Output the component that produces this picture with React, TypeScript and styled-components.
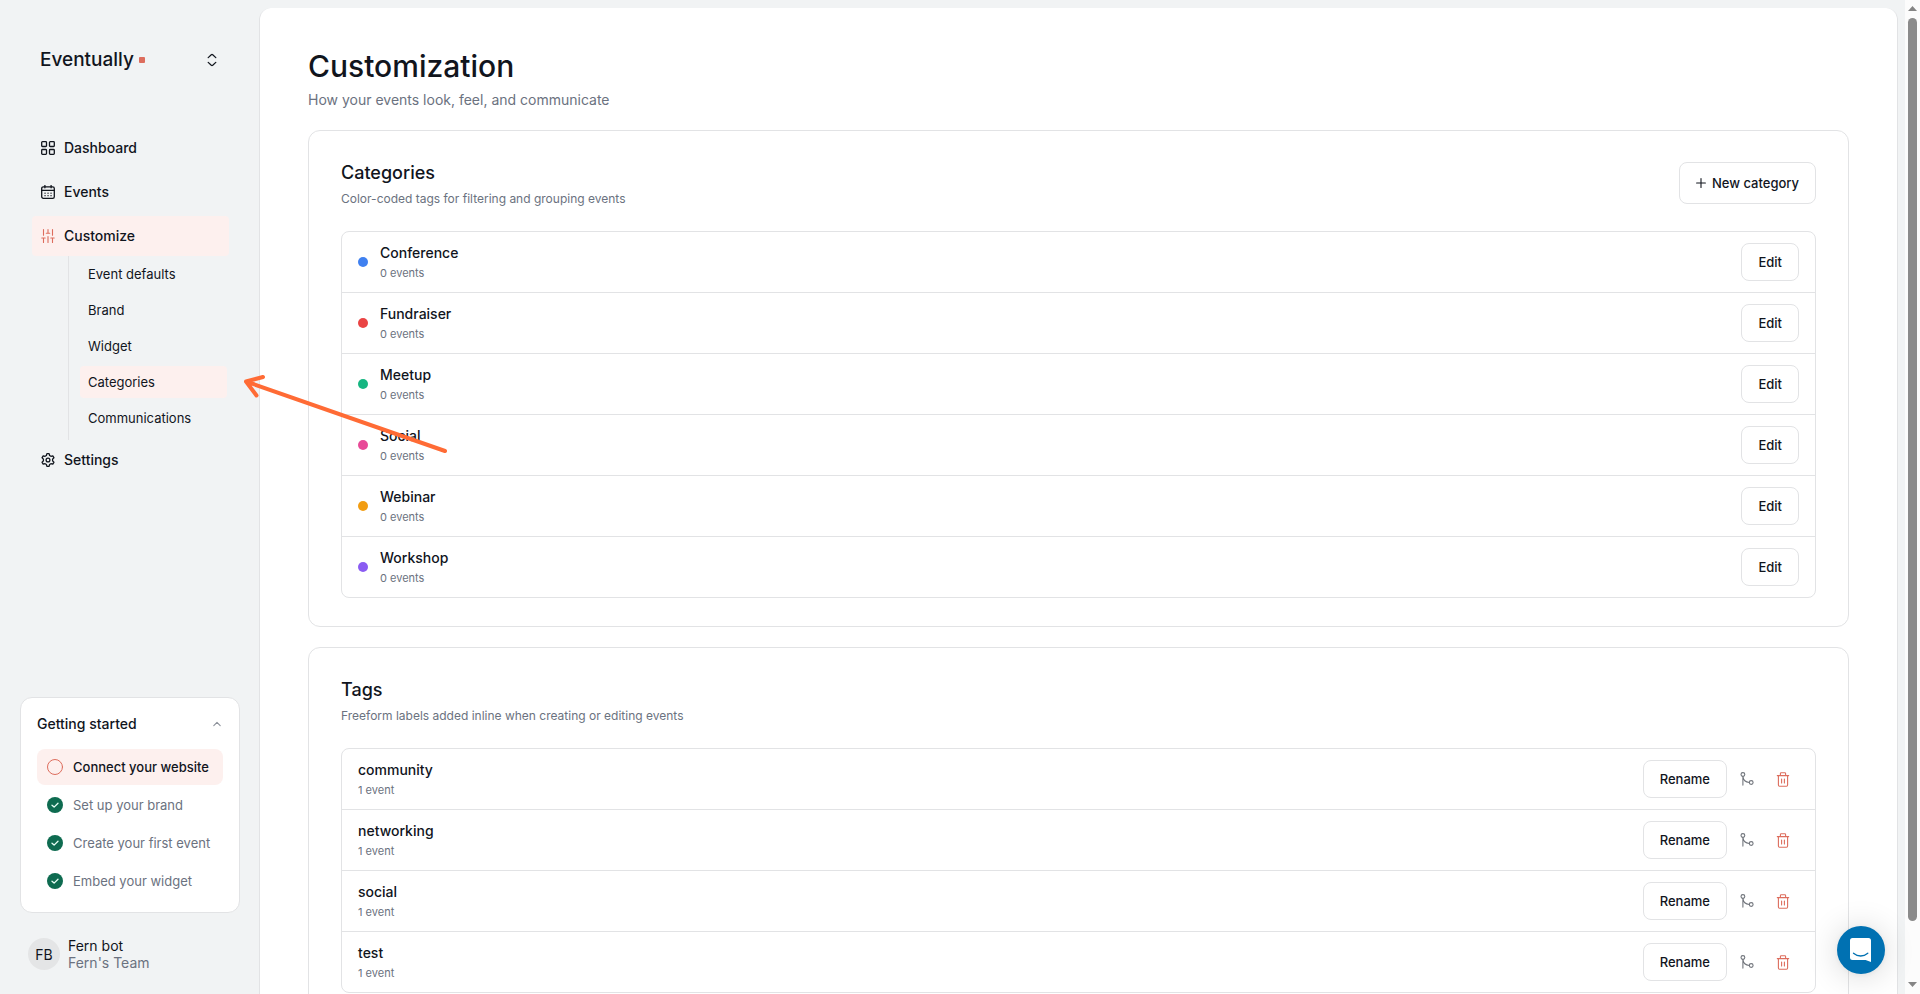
import React from "react";
import styled, { createGlobalStyle } from "styled-components";

const ink = "#11151d";
const muted = "#6b7280";
const line = "#e2e3e5";
const coral = "#dd6d5d";
const blush = "#fdf0ee";

const GlobalStyle = createGlobalStyle`
  *, *::before, *::after { box-sizing: border-box; }
  body {
    margin: 0;
    background: #f1f3f4;
    color: ${ink};
    font-family: Inter, "Liberation Sans", sans-serif;
    font-size: 14px;
    line-height: 20px;
  }
  h1, h2, h3, p, ul { margin: 0; padding: 0; font-weight: inherit; }
  ul { list-style: none; }
  a { color: inherit; text-decoration: none; }
  button { font: inherit; color: inherit; cursor: pointer; }
  svg { display: block; flex: none; }
`;

const Shell = styled.div`
  display: grid;
  grid-template-columns: 259px minmax(0, 1fr) 15px;
  grid-template-rows: minmax(0, 1fr);
  height: 100vh;
  overflow: hidden;
`;

const Sidebar = styled.aside`
  display: flex;
  flex-direction: column;
  min-height: 0;
  padding: 40px 19px 23px 20px;
`;

const SiteSwitcher = styled.button`
  display: flex;
  align-items: center;
  justify-content: space-between;
  height: 40px;
  margin: 0 0 48px;
  padding: 0 23px 0 20px;
  border: 0;
  background: none;
`;

const Brand = styled.span`
  display: flex;
  align-items: center;
  gap: 5px;
  font-size: 19px;
  line-height: 24px;
  font-weight: 500;
`;

const BrandMark = styled.span`
  width: 6px;
  height: 6px;
  border-radius: 1px;
  background: ${coral};
`;

const Nav = styled.nav`
  display: flex;
  flex-direction: column;
  gap: 4px;
  padding: 0 11px 0 12px;
`;

const NavLink = styled.a<{ $active?: boolean }>`
  display: flex;
  align-items: center;
  gap: 9px;
  height: 40px;
  padding: 0 9px;
  border-radius: 4px;
  font-weight: 500;
  background: ${(p) => (p.$active ? blush : "transparent")};
  svg { color: ${(p) => (p.$active ? coral : ink)}; }
`;

const SubNav = styled.ul`
  display: flex;
  flex-direction: column;
  gap: 4px;
  margin: -4px 0 -4px 36px;
  padding: 2px 2px 6px 11px;
  border-left: 1px solid ${line};
`;

const SubLink = styled.a<{ $active?: boolean }>`
  display: flex;
  align-items: center;
  height: 32px;
  padding: 0 8px;
  border-radius: 4px;
  font-size: 13px;
  background: ${(p) => (p.$active ? blush : "transparent")};
`;

const Checklist = styled.section`
  margin-top: auto;
  padding: 16px 16px 13px;
  border: 1px solid ${line};
  border-radius: 12px;
  background: #fff;
`;

const ChecklistToggle = styled.button`
  display: flex;
  align-items: center;
  justify-content: space-between;
  width: 100%;
  margin-bottom: 15px;
  padding: 0;
  border: 0;
  background: none;
  font-weight: 500;
  svg { margin-right: 2px; color: #8b9099; }
`;

const Steps = styled.ul`
  display: flex;
  flex-direction: column;
  gap: 2px;
`;

const StepLink = styled.a<{ $current?: boolean }>`
  display: flex;
  align-items: center;
  gap: 10px;
  height: 36px;
  padding: 0 10px;
  border-radius: 8px;
  font-size: 13px;
  white-space: nowrap;
  font-weight: ${(p) => (p.$current ? 500 : 400)};
  color: ${(p) => (p.$current ? ink : muted)};
  background: ${(p) => (p.$current ? blush : "transparent")};
`;

const Profile = styled.button`
  display: flex;
  align-items: center;
  gap: 8px;
  margin-top: 24px;
  padding: 0 8px;
  border: 0;
  background: none;
  text-align: left;
  line-height: 17px;
`;

const Avatar = styled.span`
  display: grid;
  place-items: center;
  width: 32px;
  height: 32px;
  border-radius: 50%;
  background: #e4e5e6;
`;

const ProfileText = styled.span`
  display: flex;
  flex-direction: column;
`;

const Quiet = styled.span`
  color: ${muted};
`;

const Main = styled.main`
  display: flex;
  flex-direction: column;
  gap: 20px;
  margin: 8px 7px 0 0;
  padding: 40px 48px;
  border: 1px solid ${line};
  border-width: 0 1px 0 1px;
  border-radius: 12px 12px 0 0;
  background: #fff;
`;

const PageTitle = styled.h1`
  font-size: 30px;
  line-height: 36px;
  font-weight: 500;
`;

const PageLead = styled.p`
  margin-top: 6px;
  color: ${muted};
`;

const Card = styled.section`
  padding: 28px 32px;
  border: 1px solid ${line};
  border-radius: 12px;
`;

const CardHeader = styled.header`
  display: flex;
  align-items: center;
  justify-content: space-between;
  min-height: 48px;
  margin-bottom: 24px;
`;

const CardTitle = styled.h2`
  font-size: 18px;
  line-height: 28px;
  font-weight: 500;
`;

const CardNote = styled.p`
  font-size: 12px;
  line-height: 24px;
  margin-bottom: -4px;
  color: ${muted};
`;

const OutlineButton = styled.button<{ $large?: boolean }>`
  display: flex;
  align-items: center;
  gap: 6px;
  height: ${(p) => (p.$large ? 42 : 38)}px;
  padding: 0 16px;
  border: 1px solid ${line};
  border-radius: 8px;
  background: #fff;
  font-size: 13px;
  font-weight: 500;
`;

const IconButton = styled.button<{ $danger?: boolean }>`
  display: grid;
  place-items: center;
  width: 32px;
  height: 32px;
  padding: 0;
  border: 0;
  background: none;
  color: ${(p) => (p.$danger ? coral : "#71757c")};
`;

const List = styled.ul`
  border: 1px solid ${line};
  border-radius: 8px;
`;

const Row = styled.li`
  display: flex;
  align-items: center;
  gap: 12px;
  padding: 11px 16px;
  & + & { border-top: 1px solid ${line}; }
`;

const Swatch = styled.span<{ $color: string }>`
  width: 10px;
  height: 10px;
  border-radius: 50%;
  background: ${(p) => p.$color};
`;

const RowText = styled.div`
  flex: 1;
`;

const RowName = styled.p`
  font-weight: 500;
`;

const RowCount = styled.p`
  padding-top: 2px;
  font-size: 11px;
  line-height: 16px;
  color: ${muted};
`;

const Actions = styled.div`
  display: flex;
  align-items: center;
  gap: 4px;
`;

const ScrollTrack = styled.div`
  display: flex;
  flex-direction: column;
  align-items: center;
  justify-content: space-between;
  padding: 6px 0 7px;
  background: #fcfcfc;
`;

const ScrollThumb = styled.div`
  width: 9px;
  height: 92%;
  margin: 7px 0 auto;
  border-radius: 5px;
  background: #8b8b8b;
`;

const ChatButton = styled.button`
  position: fixed;
  right: 35px;
  bottom: 20px;
  display: grid;
  place-items: center;
  width: 48px;
  height: 48px;
  padding: 0;
  border: 0;
  border-radius: 50%;
  background: #0071b2;
  box-shadow: 0 1px 6px rgba(0, 0, 0, 0.06), 0 2px 32px rgba(0, 0, 0, 0.16);
`;

const Pointer = styled.svg`
  position: absolute;
  left: 240px;
  top: 370px;
  pointer-events: none;
`;

const iconProps = {
  fill: "none",
  stroke: "currentColor",
  strokeLinecap: "round" as const,
  strokeLinejoin: "round" as const,
  "aria-hidden": true,
};

const GridIcon = () => (
  <svg width="14" height="14" viewBox="0 0 14 14" {...iconProps} strokeWidth="1.3">
    <rect x=".7" y=".7" width="4.8" height="4.8" rx=".8" />
    <rect x="8.5" y=".7" width="4.8" height="4.8" rx=".8" />
    <rect x=".7" y="8.5" width="4.8" height="4.8" rx=".8" />
    <rect x="8.5" y="8.5" width="4.8" height="4.8" rx=".8" />
  </svg>
);

const CalendarIcon = () => (
  <svg width="14" height="14" viewBox="0 0 14 14" {...iconProps} strokeWidth="1.3">
    <rect x=".7" y="1.8" width="12.6" height="11.5" rx="1.6" />
    <path d="M.7 5.4h12.6M3.9.4v2.4M10.1.4v2.4" />
    <path d="M4 8.2h.1M7 8.2h.1M10 8.2h.1M4 10.7h.1M7 10.7h.1M10 10.7h.1" />
  </svg>
);

const SlidersIcon = () => (
  <svg width="14" height="14" viewBox="0 0 14 14" {...iconProps} strokeWidth="1.1">
    <path d="M2.5.6v5.6M2.5 9v4.4M.8 9h3.4M7 .6v3.6M7 7.6v5.8M5.3 4.3h3.4M11.5.6v5.6M11.5 9v4.4M9.8 9h3.4" />
  </svg>
);

const GearIcon = () => (
  <svg width="14" height="14" viewBox="0 0 14 14" {...iconProps} strokeWidth="1.3">
    <path d="M5.900.7h2.200l.5 1.800 1.300.8 1.900-.5 1.100 1.900-1.300 1.400v1.800l1.300 1.400-1.100 1.900-1.900-.5-1.300.8-.5 1.800H5.900l-.5-1.800-1.300-.8-1.900.5-1.100-1.900 1.300-1.400V6.100L1.100 4.700l1.100-1.900 1.900.5 1.300-.8z" />
    <circle cx="7" cy="7" r="1.900" />
  </svg>
);

const SwitchIcon = () => (
  <svg width="10" height="14" viewBox="0 0 10 14" {...iconProps} strokeWidth="1.3">
    <path d="M1.200 4.600 4.300 1.700q.7-.6 1.400 0l3.100 2.900M1.200 9.400l3.100 2.900q.7.6 1.400 0l3.100-2.900" />
  </svg>
);

const ChevronUpIcon = () => (
  <svg width="8" height="6" viewBox="0 0 8 6" {...iconProps} strokeWidth="1.100">
    <path d="M.8 4.600 4 1.400l3.200 3.200" />
  </svg>
);

const PlusIcon = () => (
  <svg width="10" height="10" viewBox="0 0 10 10" {...iconProps} strokeWidth="1.100">
    <path d="M5 .6v8.800M.6 5h8.800" />
  </svg>
);

const OpenStepIcon = () => (
  <svg width="16" height="16" viewBox="0 0 16 16" {...iconProps} stroke={coral}>
    <circle cx="8" cy="8" r="7.500" />
  </svg>
);

const DoneStepIcon = () => (
  <svg width="16" height="16" viewBox="0 0 16 16" fill="none" aria-hidden>
    <circle cx="8" cy="8" r="8" fill="#0e6b50" />
    <path d="m5 8.200 2.100 1.900L11 6.200" stroke="#e9fff6" strokeWidth="1.300" strokeLinecap="round" strokeLinejoin="round" />
  </svg>
);

const MergeIcon = () => (
  <svg width="14" height="14" viewBox="0 0 14 14" {...iconProps} strokeWidth="1.100">
    <circle cx="2.900" cy="2.500" r="1.900" />
    <circle cx="11.200" cy="10.500" r="1.900" />
    <path d="M2.900 4.400v8.700M2.900 4.400c.4 3.600 2.600 5.800 6.400 6.100" />
  </svg>
);

const TrashIcon = () => (
  <svg width="14" height="15" viewBox="0 0 14 15" {...iconProps} strokeWidth="1.100">
    <path d="M1.300 3.600h11.400M4.400 3.500V1.600q0-.8.8-.8h3.600q.8 0 .8.8v1.900M2.400 3.700v9.400q0 1.100 1.100 1.100h7q1.100 0 1.100-1.100V3.700M5.600 7v3.900M8.400 7v3.900" />
  </svg>
);

const ChatIcon = () => (
  <svg width="24" height="26" viewBox="0 0 24 26" fill="none" aria-hidden>
    <path d="M3.500 1h16A2.500 2.500 0 0 1 22 3.500V25l-5.400-2H3.500A2.500 2.500 0 0 1 1 20.500v-17A2.500 2.500 0 0 1 3.500 1z" fill="#fff" />
    <path d="M4.500 16.200c4.300 3.700 10 3.700 14.300 0" stroke="#0071b2" strokeWidth="1.300" strokeLinecap="round" />
  </svg>
);

const subPages = ["Event defaults", "Brand", "Widget", "Categories", "Communications"];
const doneSteps = ["Set up your brand", "Create your first event", "Embed your widget"];
const categories = [
  { name: "Conference", color: "#3f80f0" },
  { name: "Fundraiser", color: "#ea4444" },
  { name: "Meetup", color: "#16b681" },
  { name: "Social", color: "#e84a98" },
  { name: "Webinar", color: "#f29d12" },
  { name: "Workshop", color: "#8a5cf2" },
];
const tags = ["community", "networking", "social", "test"];

export default function App() {
  return (
    <>
      <GlobalStyle />
      <Shell>
        <Sidebar>
          <SiteSwitcher>
            <Brand>
              Eventually <BrandMark />
            </Brand>
            <SwitchIcon />
          </SiteSwitcher>
          <Nav>
            <NavLink href="#dashboard"><GridIcon />Dashboard</NavLink>
            <NavLink href="#events"><CalendarIcon />Events</NavLink>
            <NavLink href="#customize" $active><SlidersIcon />Customize</NavLink>
            <SubNav>
              {subPages.map((page) => (
                <li key={page}>
                  <SubLink href="#customize" $active={page === "Categories"}>{page}</SubLink>
                </li>
              ))}
            </SubNav>
            <NavLink href="#settings"><GearIcon />Settings</NavLink>
          </Nav>
          <Checklist>
            <ChecklistToggle aria-expanded="true">
              Getting started
              <ChevronUpIcon />
            </ChecklistToggle>
            <Steps>
              <li>
                <StepLink href="#connect" $current><OpenStepIcon />Connect your website</StepLink>
              </li>
              {doneSteps.map((step) => (
                <li key={step}>
                  <StepLink href="#step"><DoneStepIcon />{step}</StepLink>
                </li>
              ))}
            </Steps>
          </Checklist>
          <Profile>
            <Avatar>FB</Avatar>
            <ProfileText>
              <span>Fern bot</span>
              <Quiet>Fern's Team</Quiet>
            </ProfileText>
          </Profile>
        </Sidebar>

        <Main>
          <header>
            <PageTitle>Customization</PageTitle>
            <PageLead>How your events look, feel, and communicate</PageLead>
          </header>

          <Card>
            <CardHeader>
              <div>
                <CardTitle>Categories</CardTitle>
                <CardNote>Color-coded tags for filtering and grouping events</CardNote>
              </div>
              <OutlineButton $large><PlusIcon />New category</OutlineButton>
            </CardHeader>
            <List>
              {categories.map((category) => (
                <Row key={category.name}>
                  <Swatch $color={category.color} />
                  <RowText>
                    <RowName>{category.name}</RowName>
                    <RowCount>0 events</RowCount>
                  </RowText>
                  <OutlineButton>Edit</OutlineButton>
                </Row>
              ))}
            </List>
          </Card>

          <Card>
            <CardHeader>
              <div>
                <CardTitle>Tags</CardTitle>
                <CardNote>Freeform labels added inline when creating or editing events</CardNote>
              </div>
            </CardHeader>
            <List>
              {tags.map((tag) => (
                <Row key={tag}>
                  <RowText>
                    <RowName>{tag}</RowName>
                    <RowCount>1 event</RowCount>
                  </RowText>
                  <Actions>
                    <OutlineButton>Rename</OutlineButton>
                    <IconButton aria-label={`Merge ${tag}`}><MergeIcon /></IconButton>
                    <IconButton aria-label={`Delete ${tag}`} $danger><TrashIcon /></IconButton>
                  </Actions>
                </Row>
              ))}
            </List>
          </Card>
        </Main>

        <ScrollTrack aria-hidden>
          <svg width="9" height="5" viewBox="0 0 9 5"><path d="M4.500 0 9 5H0z" fill="#858585" /></svg>
          <ScrollThumb />
          <svg width="9" height="5" viewBox="0 0 9 5"><path d="M4.500 5 9 0H0z" fill="#858585" /></svg>
        </ScrollTrack>
      </Shell>

      <Pointer width="212" height="90" viewBox="0 0 212 90" {...iconProps} stroke="#ff6b35" strokeWidth="4">
        <path d="M205 81 6 11.500M23 7 6 11.500l10.500 14" />
      </Pointer>
      <ChatButton aria-label="Open chat"><ChatIcon /></ChatButton>
    </>
  );
}
